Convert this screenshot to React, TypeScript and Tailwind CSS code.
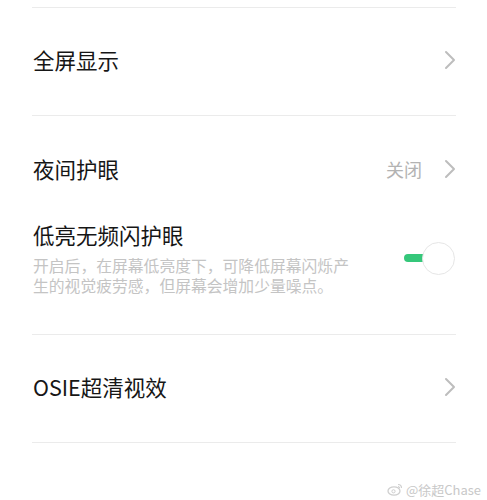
import React from "react";

const Chevron = () => (
  <svg width="12" height="20" viewBox="0 0 12 20" fill="none">
    <path d="M2 2 L10 10 L2 18" stroke="#bdbdbd" strokeWidth="2" strokeLinecap="round" strokeLinejoin="round" />
  </svg>
);

const Divider = () => <div className="h-px bg-[#ebebeb]" />;

export default function App() {
  return (
    <div
      className="w-[487px] h-[500px] bg-white overflow-hidden flex flex-col"
      style={{ fontFamily: '"Noto Sans CJK SC", "Noto Sans", sans-serif' }}
    >
      <div className="pl-[32px] pr-[31px] pt-[7px] flex flex-col">
        <Divider />
        <div className="h-[107px] pb-[4px] flex items-center justify-between pl-px">
          <span className="text-[21.5px] text-[#161616] leading-none">全屏显示</span>
          <Chevron />
        </div>
        <Divider />
        <div className="pt-[26px] pb-[2px] h-[82px] flex items-center justify-between pl-px">
          <span className="text-[21.5px] text-[#161616] leading-none">夜间护眼</span>
          <div className="flex items-center gap-[22px]">
            <span className="text-[18px] text-[#b3b3b3] leading-none">关闭</span>
            <Chevron />
          </div>
        </div>
        <div className="mt-[22px] pb-[38px] flex items-center justify-between pl-px">
          <div className="flex flex-col">
            <span className="text-[21.5px] text-[#161616] leading-[30px]">低亮无频闪护眼</span>
            <p className="mt-[6px] whitespace-nowrap text-[15.8px] text-[#c4c4c4] leading-[20px]">
              开启后，在屏幕低亮度下，可降低屏幕闪烁产
              <br />
              生的视觉疲劳感，但屏幕会增加少量噪点。
            </p>
          </div>
          <div className="flex items-center mr-px">
            <div className="w-[22px] h-[8px] rounded-full bg-[#35c77a] -mr-[4px]" />
            <div className="w-[33px] h-[33px] rounded-full border border-[#e6e6e6] bg-white" />
          </div>
        </div>
        <Divider />
        <div className="h-[107px] pb-[4px] flex items-center justify-between pl-px">
          <span className="text-[21.5px] text-[#161616] leading-none">OSIE超清视效</span>
          <Chevron />
        </div>
        <Divider />
      </div>
      <div className="flex justify-end items-center pr-[6px] mt-[40px] gap-[3px] text-[13px] text-[#c8c8c8]">
        <svg width="16" height="13" viewBox="0 0 16 13" fill="none">
          <ellipse cx="7" cy="8" rx="6" ry="4.2" stroke="#cfcfcf" strokeWidth="1.3" />
          <circle cx="6.5" cy="8.3" r="1.6" stroke="#cfcfcf" strokeWidth="1" />
          <path d="M11 1.5 Q14.5 1.5 14.5 5" stroke="#cfcfcf" strokeWidth="1.2" fill="none" />
          <path d="M11 3.5 Q12.6 3.5 12.6 5" stroke="#cfcfcf" strokeWidth="1" fill="none" />
        </svg>
        <span className="leading-none">@徐超Chase</span>
      </div>
    </div>
  );
}
